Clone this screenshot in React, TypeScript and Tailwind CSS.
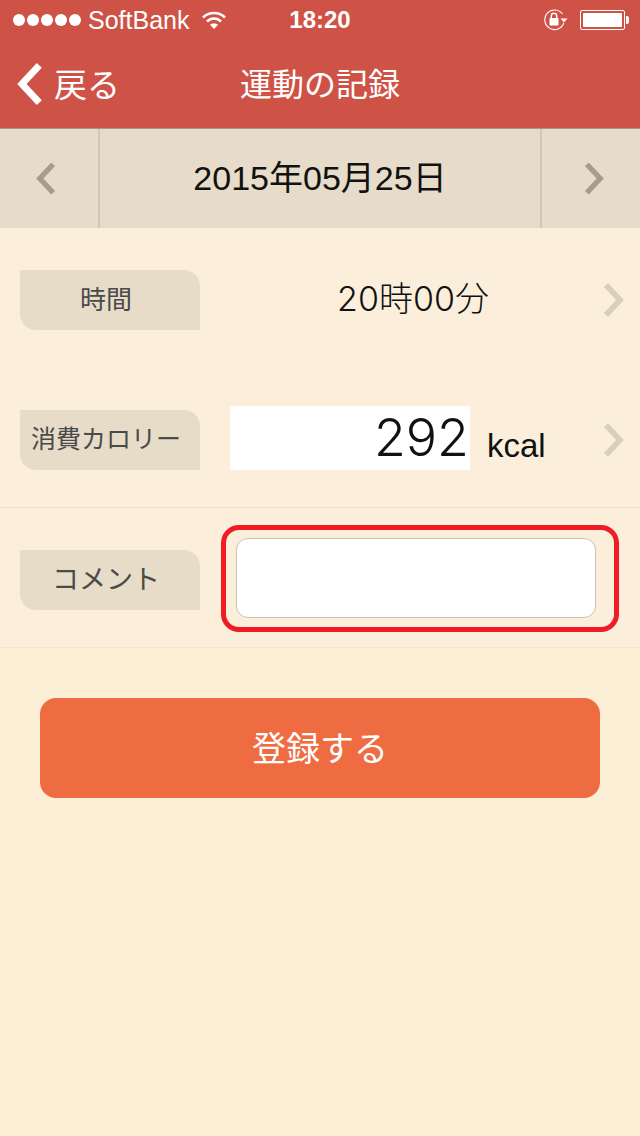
const FONT = "[font-family:'Liberation_Sans','Noto_Sans_CJK_JP',sans-serif]";
const THIN = "[font-family:'Inter','Noto_Sans_CJK_JP',sans-serif] font-light";

function Chevron({ dir, color, className }: { dir: "left" | "right"; color: string; className: string }) {
  const d = dir === "left" ? "M18 2 L4 17 L18 32" : "M3 2 L17 17 L3 32";
  return (
    <svg viewBox="0 0 21 34" className={className} fill="none">
      <path d={d} stroke={color} strokeWidth="5.6" strokeLinecap="butt" strokeLinejoin="miter" />
    </svg>
  );
}

function Signal() {
  return (
    <div className="flex gap-[2px]">
      {[0, 1, 2, 3, 4].map((i) => (
        <span key={i} className="size-[12px] rounded-full bg-white" />
      ))}
    </div>
  );
}

function Wifi() {
  return (
    <svg viewBox="0 0 26 20" className="h-[20px] w-[26px]" fill="none" stroke="white">
      <path d="M2 7.5 C8 1.5 18 1.5 24 7.5" strokeWidth="2.6" />
      <path d="M6 11.5 C10 7.5 16 7.5 20 11.5" strokeWidth="2.6" />
      <path d="M13 19 L9 14.8 C11 13 15 13 17 14.8 Z" fill="white" stroke="none" />
    </svg>
  );
}

function RotationLock() {
  return (
    <svg viewBox="0 0 24 22" className="h-[22px] w-[24px]" fill="none">
      <path d="M18.5 5 A9.8 9.8 0 1 0 19.8 14" stroke="white" strokeWidth="1.1" />
      <path d="M16.5 9.5 L23.5 9.5 L20 13.5 Z" fill="white" />
      <rect x="5.5" y="9" width="9" height="7.5" rx="0.8" fill="white" />
      <path d="M7.3 9 V7 A2.7 2.7 0 0 1 12.7 7 V9" stroke="white" strokeWidth="1.4" />
    </svg>
  );
}

function Battery() {
  return (
    <div className="flex items-center">
      <div className="h-[20px] w-[45px] rounded-[2px] border border-white p-[2px]">
        <div className="h-full w-full rounded-[1px] bg-white" />
      </div>
      <div className="ml-[1px] h-[8px] w-[3px] rounded-r-[2px] bg-white" />
    </div>
  );
}

function Label({ children, className = "text-[26px]" }: { children: string; className?: string }) {
  return (
    <div className={`flex h-[60px] w-[180px] shrink-0 items-center justify-center rounded-tr-[16px] rounded-bl-[16px] bg-[#e7dcc8] pr-[8px] text-[#4a4a48] ${className}`}>
      {children}
    </div>
  );
}

export default function App() {
  return (
    <div className={`flex h-[1136px] w-[640px] flex-col overflow-hidden bg-[#fdeed6] ${FONT}`}>
      {/* Header */}
      <header className="h-[128px] shrink-0 bg-[#cf5246] text-white">
        <div className="relative flex h-[40px] items-center pl-[13px] pr-[11px]">
          <Signal />
          <span className="ml-[7px] text-[25px] leading-none">SoftBank</span>
          <span className="ml-[12px]"><Wifi /></span>
          <span className="absolute left-0 right-0 text-center text-[24px] font-bold leading-none">18:20</span>
          <span className="ml-auto mr-[12px]"><RotationLock /></span>
          <Battery />
        </div>
        <div className="relative flex h-[88px] items-start justify-center">
          <div className="absolute left-[17px] top-[23px] flex items-center">
            <Chevron dir="left" color="white" className="h-[42px] w-[26px]" />
            <span className="ml-[11px] mt-[2px] text-[33px] leading-none">戻る</span>
          </div>
          <span className="mt-[29px] text-[32px] leading-none">運動の記録</span>
        </div>
      </header>

      {/* Date bar */}
      <div className="flex h-[100px] shrink-0 border-t border-[#9c9a8e] bg-[#e6dcc9]">
        <div className="flex w-[100px] items-center justify-center border-r-2 border-[#cfc8b9] pr-[2px]">
          <Chevron dir="left" color="#a59d8d" className="mr-[4px] h-[33px] w-[20px]" />
        </div>
        <div className="flex flex-1 items-center justify-center text-[34px] text-[#111]">2015年05月25日</div>
        <div className="flex w-[100px] items-center justify-center border-l-2 border-[#cfc8b9]">
          <Chevron dir="right" color="#a59d8d" className="ml-[6px] h-[33px] w-[20px]" />
        </div>
      </div>

      {/* Form rows */}
      <div className="bg-[#fbefdc]">
        <div className="flex h-[140px] items-start pl-[20px] pt-[42px]">
          <Label>時間</Label>
          <div className={`ml-[30px] mt-[9px] w-[366px] text-center text-[34px] leading-[40px] text-[#111] ${THIN}`}>20時00分</div>
          <Chevron dir="right" color="#d8cfbd" className="ml-[7px] mt-[13px] h-[34px] w-[21px]" />
        </div>
        <div className="flex h-[140px] items-start border-b border-[#e9dfcf] pl-[20px] pt-[42px]">
          <Label className="text-[25px]">消費カロリー</Label>
          <div className={`ml-[30px] mt-[-4px] flex h-[64px] w-[240px] items-center justify-end bg-white pr-[1px] text-[52px] leading-none text-[#111] ${THIN}`}>292</div>
          <span className="ml-[17px] mt-[16px] w-[63px] text-[33px] leading-[40px] text-[#111]">kcal</span>
          <Chevron dir="right" color="#d8cfbd" className="ml-[53px] mt-[13px] h-[34px] w-[21px]" />
        </div>
        <div className="flex h-[140px] items-start border-b border-[#f3e7d4] pl-[20px] pt-[42px]">
          <Label className="text-[27px]">コメント</Label>
          <div className="relative ml-[36px] mt-[-12px] h-[80px] w-[360px] rounded-[12px] border border-[#c9c2b5] bg-white">
            <div className="absolute left-[-16px] right-[-24px] top-[-14px] bottom-[-15px] rounded-[18px] border-[5px] border-[#ee1c25]" />
          </div>
        </div>
      </div>

      {/* Submit */}
      <div className="px-[40px] pt-[50px]">
        <button className="flex h-[100px] w-full items-center justify-center rounded-[16px] bg-[#ef6b42] pt-[2px] text-[34px] text-white">登録する</button>
      </div>
    </div>
  );
}
